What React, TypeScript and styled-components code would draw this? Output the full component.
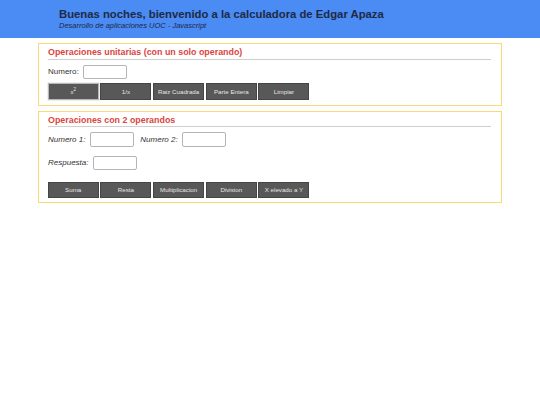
import React from "react";
import styled, { createGlobalStyle } from "styled-components";

const GlobalStyle = createGlobalStyle`
  body {
    margin: 0;
    background: #fff;
    font-family: "Liberation Sans", Arial, sans-serif;
  }
`;

const StyledHeader = styled.header`
  background: #4a8bf4;
  height: 38px;
  box-sizing: border-box;
  padding: 8px 0 0 59px;
  color: #1e2a45;
`;

const StyledTitle = styled.h1`
  margin: 0;
  font-size: 11.3px;
  line-height: 13px;
  font-weight: bold;
`;

const StyledSubtitle = styled.p`
  margin: 0;
  font-size: 7.5px;
  line-height: 9px;
  font-style: italic;
`;

const StyledMain = styled.main`
  display: flex;
  flex-direction: column;
  gap: 5px;
  width: 464px;
  margin: 5px auto 0;
`;

const StyledBox = styled.section`
  border: 1.5px solid #f9da78;
  padding: 3px 10px 0 9px;
  box-sizing: border-box;
`;

const StyledBoxTitle = styled.h2`
  margin: 0;
  color: #d9453f;
  font-size: 8.9px;
  line-height: 11px;
  font-weight: bold;
  border-bottom: 1px solid #cfcfcf;
  padding-bottom: 0.5px;
`;

const StyledRow = styled.div<{ $top: number }>`
  display: flex;
  align-items: center;
  margin-top: ${(p) => p.$top}px;
`;

const StyledLabel = styled.label<{ $italic?: boolean }>`
  font-size: 8px;
  color: #333;
  font-style: ${(p) => (p.$italic ? "italic" : "normal")};
  margin-right: 4.3px;
`;

const StyledInput = styled.input`
  width: 44px;
  height: 14.3px;
  box-sizing: border-box;
  border: 1px solid #b5b5b5;
  border-radius: 2px;
  padding: 0;
  margin-right: 6.7px;
`;

const StyledButtons = styled.div<{ $top: number; $bottom: number }>`
  display: flex;
  gap: 1.7px;
  margin: ${(p) => p.$top}px 0 ${(p) => p.$bottom}px -0.3px;
`;

const StyledButton = styled.button<{ $focused?: boolean }>`
  width: 51px;
  height: 16.7px;
  box-sizing: border-box;
  padding: 0;
  background: #585858;
  color: #e6e6e6;
  font-family: "Liberation Sans", Arial, sans-serif;
  font-size: 6.2px;
  border: 1px solid ${(p) => (p.$focused ? "#b8b8b8" : "#454545")};
  box-shadow: ${(p) => (p.$focused ? "0 0 0 0.5px #ddd" : "none")};

  sup {
    font-size: 4.5px;
  }
`;

export default function App() {
  const unary = ["1/x", "Raiz Cuadrada", "Parte Entera", "Limpiar"];
  const binary = ["Suma", "Resta", "Multiplicacion", "Division", "X elevado a Y"];

  return (
    <>
      <GlobalStyle />
      <StyledHeader>
        <StyledTitle>Buenas noches, bienvenido a la calculadora de Edgar Apaza</StyledTitle>
        <StyledSubtitle>Desarrollo de aplicaciones UOC - Javascript</StyledSubtitle>
      </StyledHeader>
      <StyledMain>
        <StyledBox>
          <StyledBoxTitle>Operaciones unitarias (con un solo operando)</StyledBoxTitle>
          <StyledRow $top={5}>
            <StyledLabel>Numero:</StyledLabel>
            <StyledInput type="text" />
          </StyledRow>
          <StyledButtons $top={4.3} $bottom={5}>
            <StyledButton $focused>
              x<sup>2</sup>
            </StyledButton>
            {unary.map((label, i) => (
              <StyledButton key={`unary-${i}`}>{label}</StyledButton>
            ))}
          </StyledButtons>
        </StyledBox>
        <StyledBox>
          <StyledBoxTitle>Operaciones con 2 operandos</StyledBoxTitle>
          <StyledRow $top={5}>
            <StyledLabel $italic>Numero 1:</StyledLabel>
            <StyledInput type="text" />
            <StyledLabel $italic>Numero 2:</StyledLabel>
            <StyledInput type="text" />
          </StyledRow>
          <StyledRow $top={9}>
            <StyledLabel $italic>Respuesta:</StyledLabel>
            <StyledInput type="text" />
          </StyledRow>
          <StyledButtons $top={11.7} $bottom={4}>
            {binary.map((label, i) => (
              <StyledButton key={`binary-${i}`}>{label}</StyledButton>
            ))}
          </StyledButtons>
        </StyledBox>
      </StyledMain>
    </>
  );
}
